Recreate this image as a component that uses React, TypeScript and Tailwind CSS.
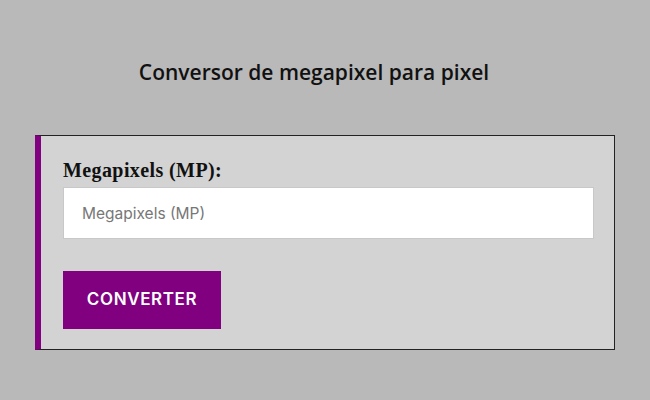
export default function App() {
  return (
    <div className="w-[650px] h-[400px] bg-[#b9b9b9] overflow-hidden">
      <div className="pt-[57px] pr-[22px] flex justify-center">
        <h1 className="text-[21px] leading-[30px] text-[#111] font-semibold font-['Open_Sans',Arial,sans-serif]">
          Conversor de megapixel para pixel
        </h1>
      </div>
      <div className="mt-[48px] mx-[35px] w-[580px] h-[215px] bg-[#d3d3d3] border border-[#222] border-l-[6px] border-l-[#800080] pl-[22px] pr-[20px] pt-[20px] flex flex-col items-start">
        <label className="block text-[20px] leading-[28px] font-bold tracking-[0.4px] text-[#111] font-['Liberation_Serif','Times_New_Roman',serif]">
          Megapixels (MP):
        </label>
        <input
          type="text"
          placeholder="Megapixels (MP)"
          className="block w-full h-[52px] mt-[3px] bg-white border border-[#c8c8c8] px-[18px] text-[15.5px] placeholder:text-[#777] outline-none font-['Inter','Liberation_Sans',sans-serif]"
        />
        <button className="mt-[32px] h-[58px] w-[158px] bg-[#800080] text-white text-[17px] font-semibold tracking-[0.6px] font-['Inter','Liberation_Sans',sans-serif]">
          CONVERTER
        </button>
      </div>
    </div>
  );
}
